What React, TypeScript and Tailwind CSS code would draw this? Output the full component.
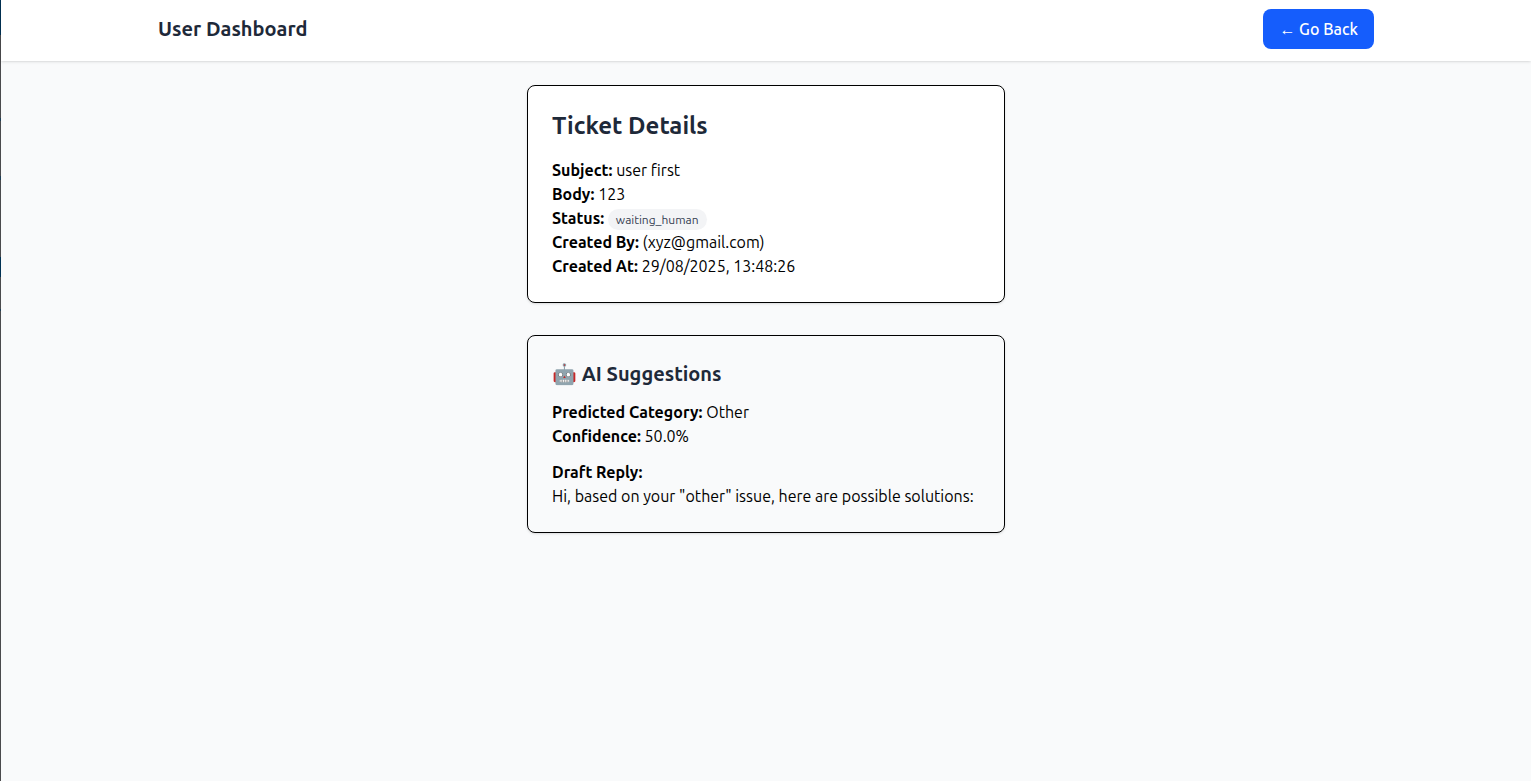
import type { ReactNode } from "react";

function Field({ label, children }: { label: string; children: ReactNode }) {
  return (
    <p>
      <strong className="font-bold">{label}:</strong> {children}
    </p>
  );
}

export default function App() {
  return (
    <div className="flex min-h-screen bg-gray-50 font-[Ubuntu,'Noto_Sans',sans-serif] text-base text-black">
      <div className="w-px shrink-0 bg-[linear-gradient(#003153_35px,#4a4a4d_35px,#4a4a4d_118px,#1d3d55_118px,#1d3d55_121px,#4a4a4d_121px,#4a4a4d_176px,#1d3d55_176px,#1d3d55_180px,#4a4a4d_180px,#4a4a4d_257px,#003153_257px,#003153_277px,#4a4a4d_277px,#4a4a4d_309px,#1d3d55_309px,#1d3d55_311px,#4a4a4d_311px)]" />
      <div className="min-w-0 flex-1">
        <header className="bg-white shadow-sm">
          <div className="mx-auto flex max-w-7xl items-center justify-between px-8 pt-[9px] pb-3">
            <h1 className="text-xl font-bold text-gray-800">User Dashboard</h1>
            <button type="button" className="rounded-lg bg-[#155dfc] px-4 py-2 font-medium text-white">
              ← Go Back
            </button>
          </div>
        </header>
        <main className="mx-auto flex w-full max-w-[478px] flex-col gap-8 py-6">
          <section className="rounded-lg border border-black bg-white p-6 shadow-sm">
            <h2 className="mb-4 text-2xl font-bold text-gray-800">Ticket Details</h2>
            <Field label="Subject">user first</Field>
            <Field label="Body">123</Field>
            <Field label="Status">
              <span className="rounded-full bg-gray-100 px-2 py-1 text-xs text-gray-700">waiting_human</span>
            </Field>
            <Field label="Created By">(xyz@gmail.com)</Field>
            <Field label="Created At">29/08/2025, 13:48:26</Field>
          </section>
          <section className="rounded-lg border border-black bg-gray-50 p-6 shadow-sm">
            <h3 className="mb-3 text-xl font-bold text-gray-800">🤖 AI Suggestions</h3>
            <Field label="Predicted Category">Other</Field>
            <Field label="Confidence">50.0%</Field>
            <div className="mt-3">
              <strong className="font-bold">Draft Reply:</strong>
              <p>Hi, based on your "other" issue, here are possible solutions:</p>
            </div>
          </section>
        </main>
      </div>
    </div>
  );
}
